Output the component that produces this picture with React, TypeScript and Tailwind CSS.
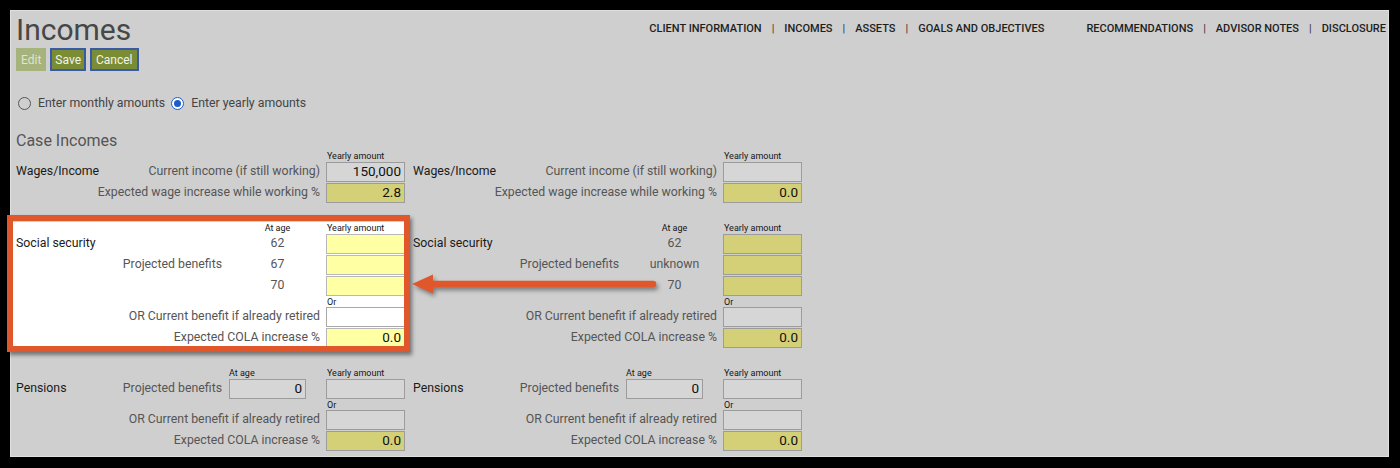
import React from "react";

type Tone = "grey" | "olive" | "pale" | "white";

const toneCls: Record<Tone, string> = {
  grey: "bg-[#d6d6d6] border-[#9c9c9c]",
  olive: "bg-[#d3d078] border-[#9c9c9c]",
  pale: "bg-[#ffffa3] border-[#b8b8b8]",
  white: "bg-white border-[#a8a8a8]",
};

function Box({ tone, value = "", wide = true }: { tone: Tone; value?: string; wide?: boolean }) {
  return (
    <div
      className={`${wide ? "w-[79px]" : "w-[77px]"} h-[20px] border ${toneCls[tone]} flex items-center justify-end pr-[3px] text-[13.5px] leading-none text-[#111]`}
    >
      {value}
    </div>
  );
}

function Small({ children }: { children: React.ReactNode }) {
  return <span className="text-[9px] leading-[12px] text-[#151515]">{children}</span>;
}

function Name({ children }: { children: React.ReactNode }) {
  return <span className="text-[12.3px] leading-[14px] text-[#1a1a1a]">{children}</span>;
}

function Lbl({ children }: { children: React.ReactNode }) {
  return <span className="text-[12.3px] leading-[14px] text-[#555]">{children}</span>;
}

function LabelRow({ label, children }: { label: string; children: React.ReactNode }) {
  return (
    <div className="flex h-[21px]">
      <div className="w-[310px] h-[20px] flex items-center justify-end pr-[6px] pb-[3px]">
        <Lbl>{label}</Lbl>
      </div>
      {children}
    </div>
  );
}

function OrRow() {
  return (
    <div className="flex h-[10px] items-center">
      <div className="w-[311px]" />
      <Small>Or</Small>
    </div>
  );
}

function Wages({ income, inc }: { income: string; inc: string }) {
  return (
    <div className="w-[397px] shrink-0">
      <div className="flex h-[12px] items-center">
        <div className="w-[311px]" />
        <Small>Yearly amount</Small>
      </div>
      <div className="flex h-[21px]">
        <div className="w-[310px] h-[20px] flex items-center justify-between pr-[6px] pb-[3px]">
          <Name>Wages/Income</Name>
          <Lbl>Current income (if still working)</Lbl>
        </div>
        <Box tone="grey" value={income} />
      </div>
      <LabelRow label="Expected wage increase while working %">
        <Box tone="olive" value={inc} />
      </LabelRow>
    </div>
  );
}

function Social({ left }: { left: boolean }) {
  const yt: Tone = left ? "pale" : "olive";
  const ages = left ? ["62", "67", "70"] : ["62", "unknown", "70"];
  return (
    <div className="relative w-[397px] shrink-0">
      {left && <div className="absolute left-[-3px] top-0 w-[391px] h-[124px] bg-white" />}
      <div className="relative">
        <div className="flex h-[12px] items-center">
          <div className="w-[213px]" />
          <div className="w-[97px] flex justify-center">
            <Small>At age</Small>
          </div>
          <div className="pl-[1px] flex">
            <Small>Yearly amount</Small>
          </div>
        </div>
        {ages.map((a, i) => (
          <div key={i} className="flex h-[21px]">
            <div className="w-[213px] h-[20px] flex items-center justify-between pr-[7px] pb-[3px]">
              {i === 0 ? <Name>Social security</Name> : <span />}
              {i === 1 ? <Lbl>Projected benefits</Lbl> : <span />}
            </div>
            <div className="w-[97px] h-[20px] flex items-center justify-center pb-[3px]">
              <Lbl>{a}</Lbl>
            </div>
            <Box tone={yt} />
          </div>
        ))}
        <OrRow />
        <LabelRow label="OR Current benefit if already retired">
          <Box tone={left ? "white" : "grey"} />
        </LabelRow>
        <LabelRow label="Expected COLA increase %">
          <Box tone={yt} value="0.0" />
        </LabelRow>
      </div>
    </div>
  );
}

function Pensions() {
  return (
    <div className="w-[397px] shrink-0">
      <div className="flex h-[12px] items-center">
        <div className="w-[213px]" />
        <div className="w-[98px] flex">
          <Small>At age</Small>
        </div>
        <Small>Yearly amount</Small>
      </div>
      <div className="flex h-[21px]">
        <div className="w-[213px] h-[20px] flex items-center justify-between pr-[7px] pb-[3px]">
          <Name>Pensions</Name>
          <Lbl>Projected benefits</Lbl>
        </div>
        <Box tone="grey" value="0" wide={false} />
        <div className="w-[20px]" />
        <Box tone="grey" />
      </div>
      <OrRow />
      <LabelRow label="OR Current benefit if already retired">
        <Box tone="grey" />
      </LabelRow>
      <LabelRow label="Expected COLA increase %">
        <Box tone="olive" value="0.0" />
      </LabelRow>
    </div>
  );
}

function Sep() {
  return <span className="mx-[10px] font-normal text-[#333]">|</span>;
}

export default function App() {
  const navA = ["CLIENT INFORMATION", "INCOMES", "ASSETS", "GOALS AND OBJECTIVES"];
  const navB = ["RECOMMENDATIONS", "ADVISOR NOTES", "DISCLOSURE"];
  return (
    <div className="relative w-[1400px] h-[468px] bg-black pt-[10px] pl-[10px] font-['Roboto',sans-serif] overflow-hidden">
      <div className="w-[1379px] h-[447px] bg-[#cfcfcf] border border-[#e0e0e0] pl-[5px] pr-[2px] pt-[3px]">
        <div className="flex items-start justify-between">
          <h1 className="text-[30px] leading-[31px] h-[31px] text-[#474747]">Incomes</h1>
          <nav className="mt-[8px] flex items-center text-[11px] leading-[13px] font-medium text-[#1e1e1e]">
            {navA.map((n, i) => (
              <React.Fragment key={n}>
                {i > 0 && <Sep />}
                <span>{n}</span>
              </React.Fragment>
            ))}
            <span className="ml-[42px]" />
            {navB.map((n, i) => (
              <React.Fragment key={n}>
                {i > 0 && <Sep />}
                <span>{n}</span>
              </React.Fragment>
            ))}
          </nav>
        </div>

        <div className="mt-[3px] flex gap-[4px] h-[23px] text-[12px]">
          <div className="h-[23px] px-[5px] flex items-center bg-[#a6b37c] text-[#dfe4cd]">Edit</div>
          <div className="h-[23px] px-[3px] flex items-center bg-[#7a8c34] border-2 border-[#3b5aa6] text-[#f3f3ea]">Save</div>
          <div className="h-[23px] px-[4px] flex items-center bg-[#7a8c34] border-2 border-[#3b5aa6] text-[#f3f3ea]">Cancel</div>
        </div>

        <div className="mt-[24px] h-[16px] flex items-center pl-[2px] text-[12.3px] text-[#444]">
          <div className="w-[13px] h-[13px] rounded-full border border-[#555]" />
          <span className="ml-[7px]">Enter monthly amounts</span>
          <div className="ml-[6px] w-[13px] h-[13px] rounded-full border border-[#1e5bc6] bg-white flex items-center justify-center">
            <div className="w-[7px] h-[7px] rounded-full bg-[#1e5bc6]" />
          </div>
          <span className="ml-[7px]">Enter yearly amounts</span>
        </div>

        <div className="mt-[21px] h-[18px] text-[16px] leading-[18px] text-[#555]">Case Incomes</div>

        <div className="flex">
          <Wages income="150,000" inc="2.8" />
          <Wages income="" inc="0.0" />
        </div>

        <div className="mt-[18px] flex">
          <Social left={true} />
          <Social left={false} />
        </div>

        <div className="mt-[18px] flex">
          <Pensions />
          <Pensions />
        </div>
      </div>

      <div className="absolute left-[7px] top-[215px] w-[403px] h-[137px] border-[6px] border-[#e0572b] shadow-[2px_3px_4px_rgba(0,0,0,0.45)] pointer-events-none" />

      <svg
        className="absolute left-[408px] top-[268px] w-[256px] h-[36px] drop-shadow-[2px_3px_2px_rgba(0,0,0,0.4)]"
        viewBox="0 0 256 36"
      >
        <line x1="22" y1="16" x2="245" y2="16" stroke="#e0572b" strokeWidth="6.5" strokeLinecap="round" />
        <polygon points="4,16 25,6.5 25,25.5" fill="#e0572b" />
      </svg>
    </div>
  );
}
